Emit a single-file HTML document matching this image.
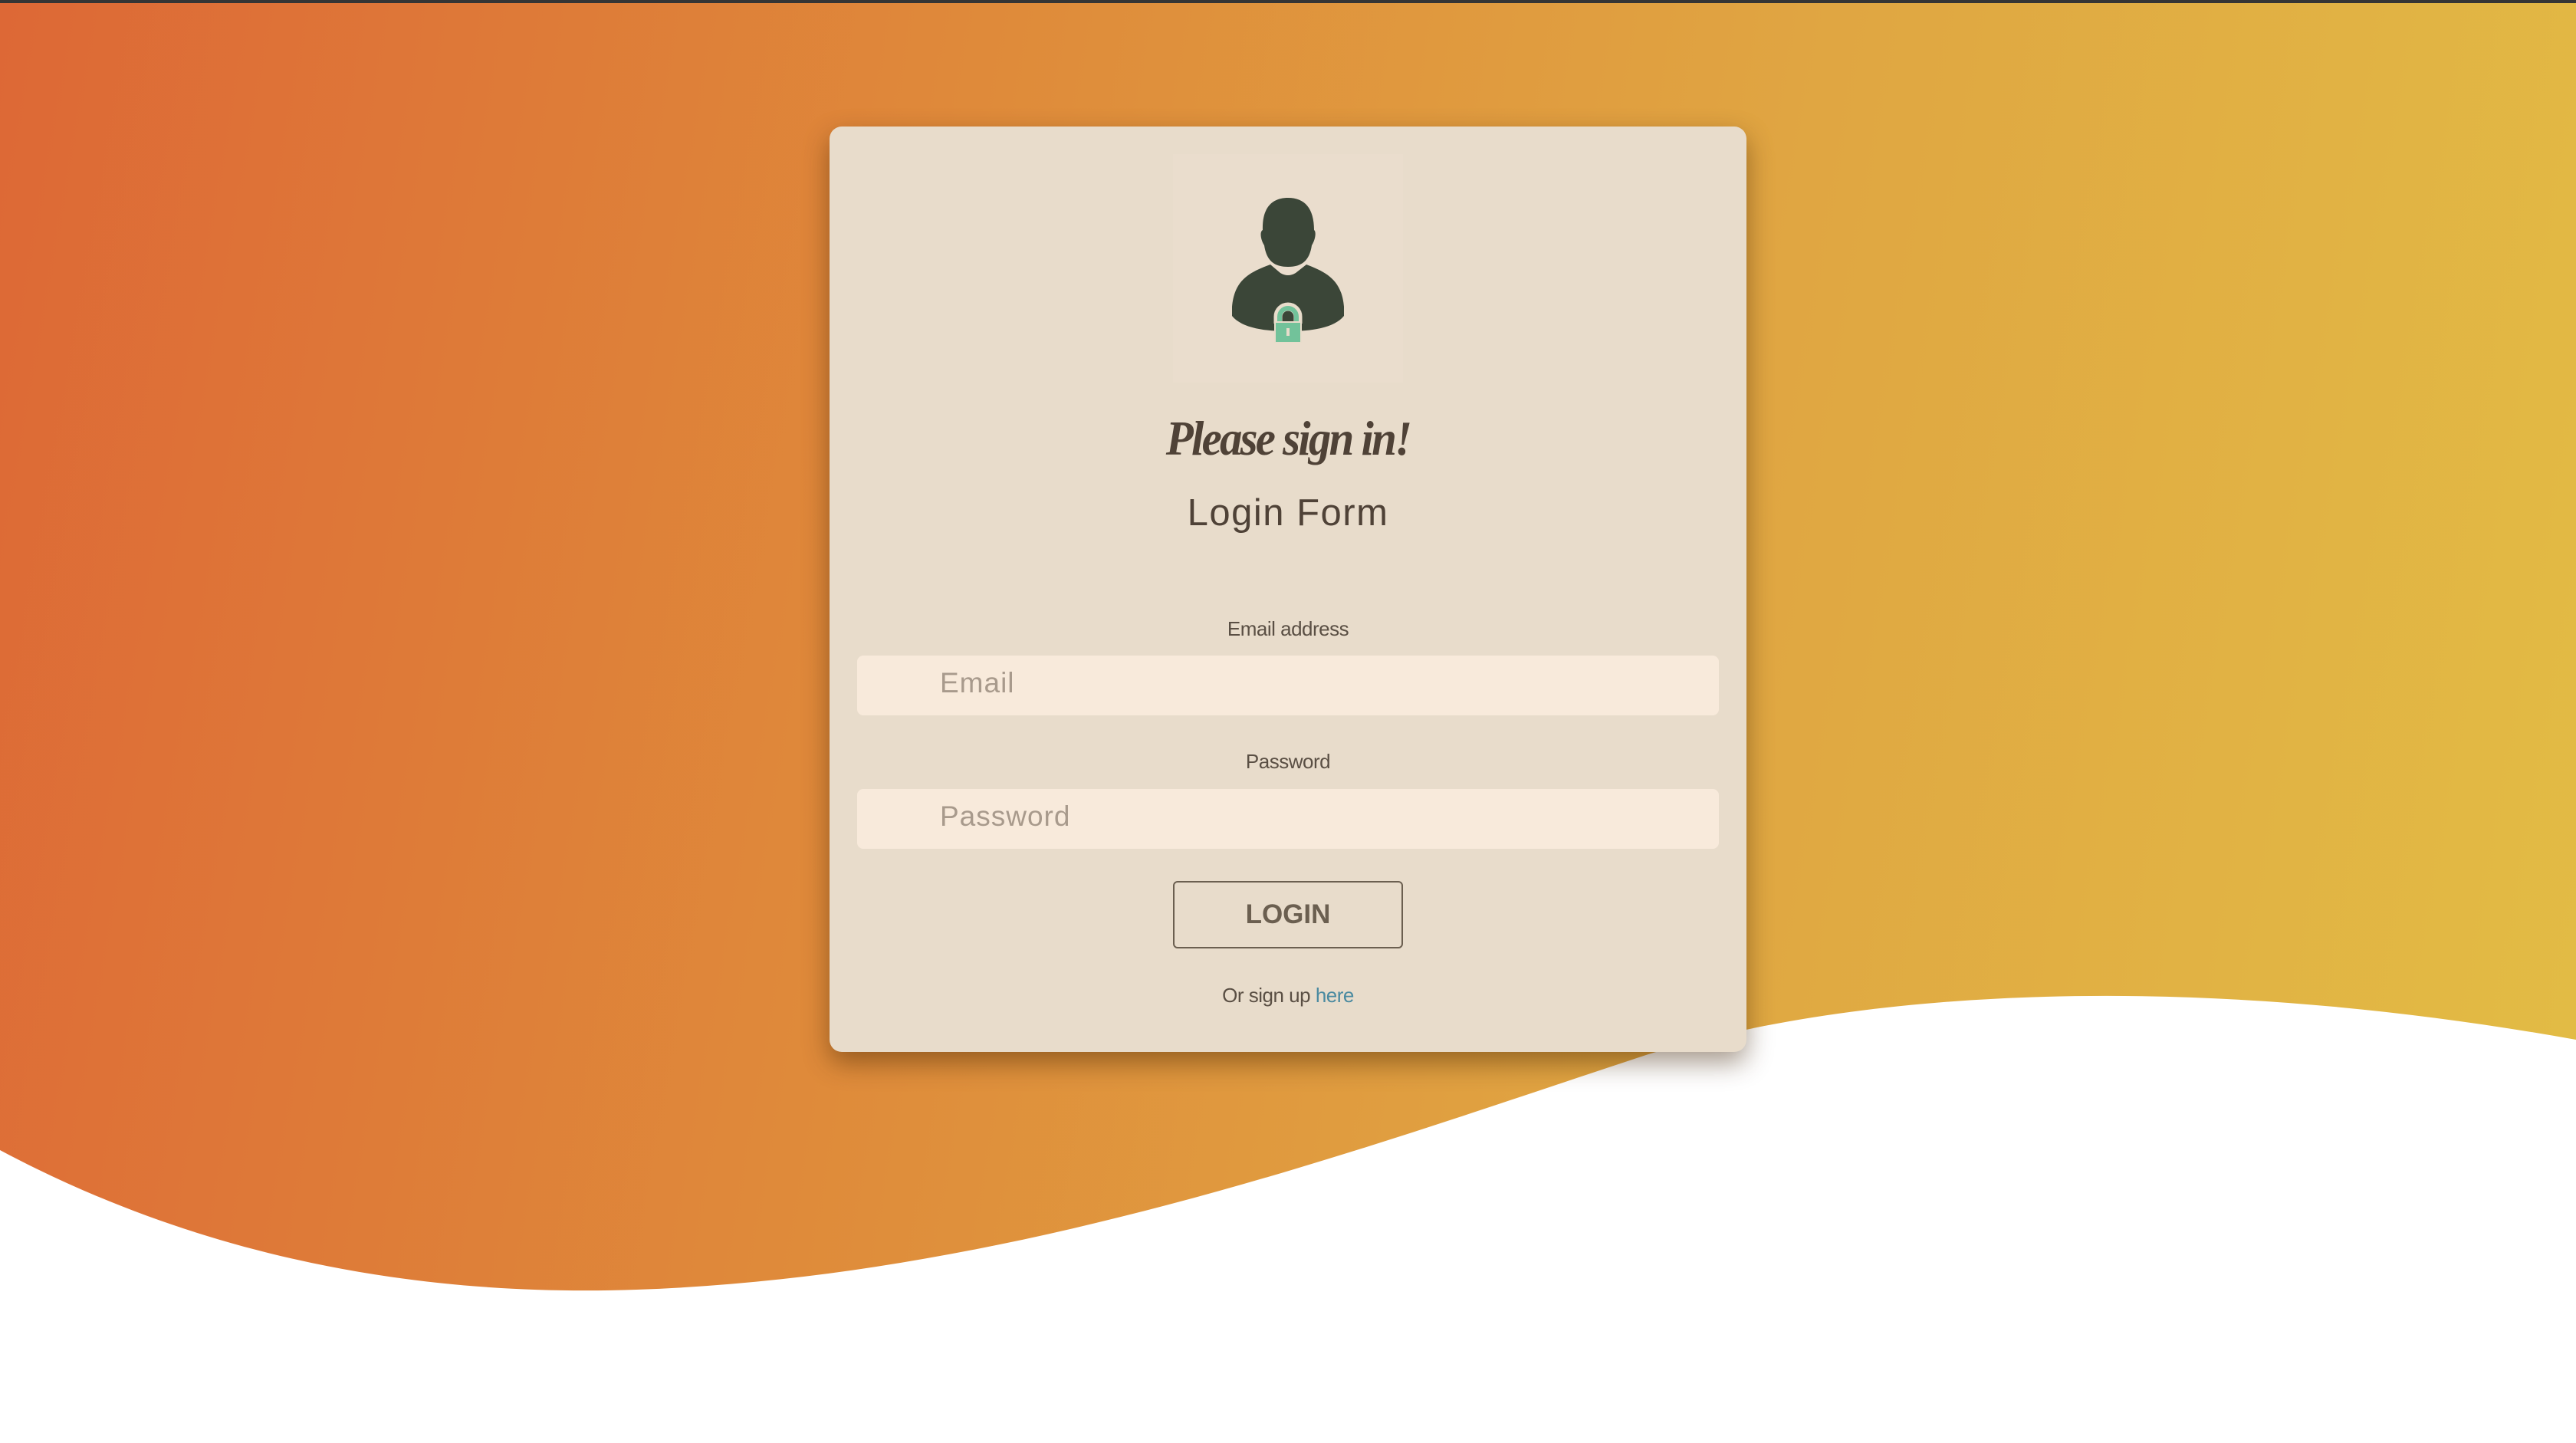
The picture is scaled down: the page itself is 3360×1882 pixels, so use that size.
<!DOCTYPE html>
<html><head><meta charset="utf-8"><style>
html,body{margin:0;padding:0}
body{width:3360px;height:1882px;position:relative;overflow:hidden;background:linear-gradient(100deg,#dd6836 0%,#df8a3a 35%,#e0a642 65%,#e2bd45 100%);font-family:"Liberation Sans",sans-serif}
.topbar{position:absolute;left:0;top:0;width:3360px;height:4px;background:#353535}
svg.wave{position:absolute;left:0;top:0}
.card{position:absolute;left:1082px;top:165px;width:1196px;height:1207px;border-radius:16px;background:#e8dccb;box-shadow:0 14px 34px rgba(60,30,0,.45)}
.iconbox{position:absolute;left:448px;top:36px;width:300px;height:298px;background:#eaddcd}
.t{position:absolute;left:0;width:100%;text-align:center}
.input{position:absolute;left:36px;width:1124px;height:78px;border-radius:8px;background:#f8eadb}
.input span{position:absolute;left:108px;top:15px;font-size:37px;color:#a89a8c;letter-spacing:1px}
.btn{position:absolute;left:448px;top:984px;width:300px;height:88px;border:2px solid #6b5f50;border-radius:6px;box-sizing:border-box;text-align:center;line-height:84px;font-size:35px;font-weight:bold;color:#6b5f50}
.lbl{font-size:26px;color:#5a4f44;letter-spacing:-0.5px}
</style></head><body>
<svg class="wave" width="3360" height="1882"><path d="M0,1500 C300,1660 600,1690 830,1682 C1330,1665 1800,1490 2150,1375 C2450,1285 2880,1270 3360,1356 L3360,1882 L0,1882 Z" fill="#fff"/></svg>
<div class="topbar"></div>
<div class="card">
 <div class="iconbox"></div>
 <svg style="position:absolute;left:498px;top:75px" width="200" height="220" viewBox="0 0 200 220">
  <path d="M67,60 C66,30 80,18 100,18 C122,18 134,32 134,60 C137,62 136,72 131,80 C128,100 118,108 100,108 C82,108 72,100 69,80 C64,72 63,62 67,60 Z" fill="#3b4638"/>
  <path d="M77,105 L90,116 Q100,122 110,116 L124,105 C150,115 170,125 173,160 L173,172 C160,188 130,192 100,192 C70,192 40,188 27,172 L27,160 C30,125 50,115 77,105 Z" fill="#3b4638"/>
  <path d="M87,182 L87,173 A13,13 0 0 1 113,173 L113,182" fill="none" stroke="#e8dccb" stroke-width="11"/>
  <path d="M89,182 L89,173 A11,11 0 0 1 111,173 L111,182" fill="none" stroke="#72c29a" stroke-width="6"/>
  <rect x="82" y="179" width="36" height="28" fill="#e8dccb"/>
  <rect x="84" y="181" width="32" height="25" fill="#72c29a"/>
  <rect x="98" y="188" width="4" height="10" fill="#e8dccb"/>
 </svg>
 <div class="t" style="top:370px;font-family:'Liberation Serif',serif;font-style:italic;font-weight:bold;font-size:64px;color:#4f4237;letter-spacing:-3px;transform:scaleX(0.92)">Please sign in!</div>
 <div class="t" style="top:476px;font-size:49px;color:#4f4237;letter-spacing:1.5px">Login Form</div>
 <div class="t lbl" style="top:640px">Email address</div>
 <div class="input" style="top:690px"><span>Email</span></div>
 <div class="t lbl" style="top:813px">Password</div>
 <div class="input" style="top:864px"><span>Password</span></div>
 <div class="btn">LOGIN</div>
 <div class="t lbl" style="top:1118px">Or sign up <span style="color:#4a8aa0">here</span></div>
</div>
</body></html>
